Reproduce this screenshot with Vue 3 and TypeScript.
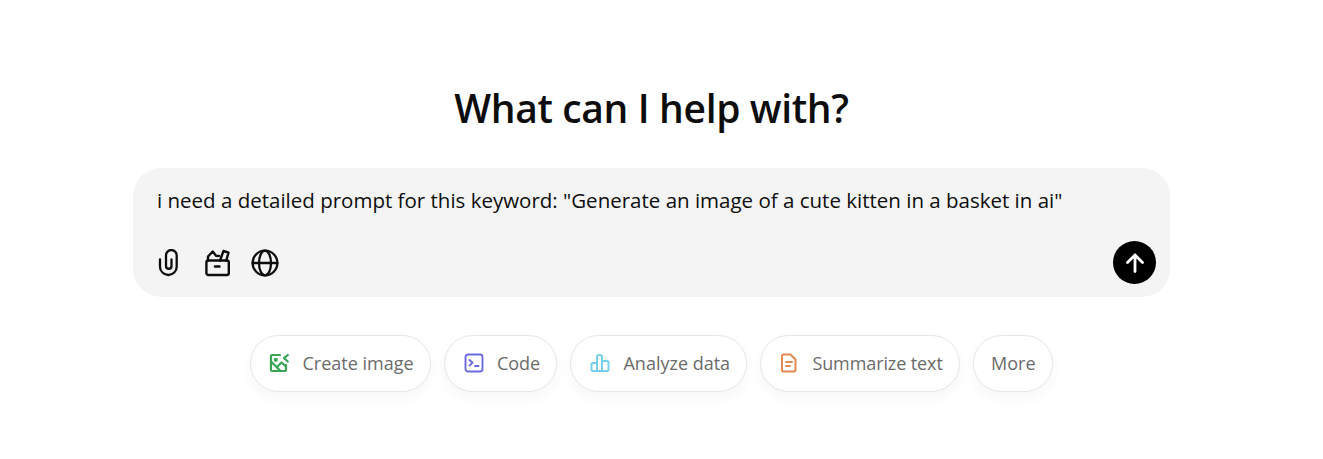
<script setup lang="ts">
const prompt = 'i need a detailed prompt for this keyword: "Generate an image of a cute kitten in a basket in ai"'
</script>

<template>
  <main class="page">
    <h1 class="title">What can I help with?</h1>
    <section class="composer">
      <p class="prompt">{{ prompt }}</p>
      <div class="toolbar">
        <div class="tools">
          <svg class="tool" viewBox="0 0 28 28" fill="none" stroke="#0d0d0d" stroke-width="2.3" stroke-linecap="round" stroke-linejoin="round">
            <path d="M6 10.5v7.15a8.35 8.35 0 0 0 16.7 0V6.4a5.35 5.35 0 0 0-10.7 0V17a2.75 2.75 0 0 0 5.5 0v-6.5" />
          </svg>
          <svg class="tool" viewBox="0 0 28 28" fill="none" stroke="#0d0d0d" stroke-width="2.4" stroke-linecap="round" stroke-linejoin="round">
            <rect x="3.4" y="11.5" width="22.4" height="14.5" rx="2" />
            <path d="M12 17.5h4.5" />
            <path d="M5 11.5V7.5l4.7-5 3.3 4.2 3 .3" />
            <path d="M17 11.5 20.5 2l5 1.6-2.2 7.9" />
          </svg>
          <svg class="tool" viewBox="0 0 28 28" fill="none" stroke="#0d0d0d" stroke-width="2.3" stroke-linecap="round" stroke-linejoin="round">
            <circle cx="14" cy="14" r="12.4" />
            <path d="M1.6 14h24.8" />
            <ellipse cx="14" cy="14" rx="6" ry="12.4" />
          </svg>
        </div>
        <button class="send" type="button" aria-label="Send">
          <svg viewBox="0 0 24 24" fill="none" stroke="#fff" stroke-width="2.8" stroke-linecap="round" stroke-linejoin="round">
            <path d="M12 20.5V4M4.5 11.5 12 4l7.5 7.5" />
          </svg>
        </button>
      </div>
    </section>
    <nav class="chips">
      <button class="chip" type="button">
        <svg viewBox="0 0 20 20" fill="none" stroke="#3aa655" stroke-width="2.2" stroke-linecap="round" stroke-linejoin="round">
          <path d="M11 2H3a1 1 0 0 0-1 1v14a1 1 0 0 0 1 1h13a1 1 0 0 0 1-1V12" />
          <circle cx="6.8" cy="6.8" r="1" />
          <path d="M2 8.5 11.5 18M8 14l4.5-4.5 4.5 4" />
          <path d="M18.8 2 15 5.2l3.8 3.3" />
        </svg>
        <span>Create image</span>
      </button>
      <button class="chip chip-code" type="button">
        <svg viewBox="0 0 20 20" fill="none" stroke="#6b6be0" stroke-width="1.9" stroke-linecap="round" stroke-linejoin="round">
          <rect x="1.5" y="1.5" width="17" height="17" rx="2.5" />
          <path d="m5.5 7 3 2.8-3 2.8M11 13h3.5" />
        </svg>
        <span>Code</span>
      </button>
      <button class="chip chip-data" type="button">
        <svg viewBox="0 0 20 20" fill="none" stroke="#76d0ea" stroke-width="2" stroke-linecap="round" stroke-linejoin="round">
          <path d="M1.5 11.5a1.5 1.5 0 0 1 1.5-1.5h4v8H3a1.5 1.5 0 0 1-1.5-1.5z" />
          <path d="M7 4a2 2 0 0 1 2-2h1a2 2 0 0 1 2 2v14H7z" />
          <path d="M12 8h5a1.5 1.5 0 0 1 1.5 1.5v7A1.5 1.5 0 0 1 17 18h-5z" />
        </svg>
        <span>Analyze data</span>
      </button>
      <button class="chip chip-text" type="button">
        <svg viewBox="0 0 20 20" fill="none" stroke="#e2894f" stroke-width="2" stroke-linecap="round" stroke-linejoin="round">
          <path d="M4.5 1.5h7l5 5v10.5a1.5 1.5 0 0 1-1.5 1.5h-10.5A1.5 1.5 0 0 1 3 17V3a1.5 1.5 0 0 1 1.5-1.5z" />
          <path d="M7 9h6M7 13h4" />
        </svg>
        <span>Summarize text</span>
      </button>
      <button class="chip chip-more" type="button"><span>More</span></button>
    </nav>
  </main>
</template>

<style>
html, body { margin: 0; background: #fff; }
</style>

<style scoped>
.page {
  box-sizing: border-box;
  width: 1303px;
  height: 459px;
  padding-top: 82px;
  display: flex;
  flex-direction: column;
  align-items: center;
  font-family: "Open Sans", "Noto Sans", sans-serif;
  background: #fff;
}
.title {
  margin: 0;
  height: 52px;
  line-height: 52px;
  font-size: 39px;
  font-weight: 600;
  color: #0d0d0d;
  letter-spacing: -0.36px;
}
.composer {
  box-sizing: border-box;
  width: 1037px;
  height: 129px;
  margin-top: 34px;
  padding: 17px 14px 13px 24px;
  border-radius: 28px;
  background: #f4f4f4;
  display: flex;
  flex-direction: column;
  justify-content: space-between;
}
.prompt {
  margin: 0;
  font-size: 20.5px;
  line-height: 30px;
  color: #0d0d0d;
}
.toolbar {
  display: flex;
  align-items: center;
  justify-content: space-between;
}
.tools {
  display: flex;
  gap: 20.5px;
  align-items: center;
  margin-left: -3px;
}
.tool {
  width: 28px;
  height: 28px;
  display: block;
}
.send {
  width: 43px;
  height: 43px;
  border: 0;
  padding: 0;
  border-radius: 50%;
  background: #000;
  display: flex;
  align-items: center;
  justify-content: center;
}
.send svg {
  width: 24px;
  height: 24px;
}
.chips {
  display: flex;
  gap: 13.3px;
  margin-top: 38px;
}
.chip {
  box-sizing: border-box;
  height: 57px;
  display: flex;
  align-items: center;
  gap: 13px;
  padding: 0 16px 1px 18px;
  border: 1px solid #e6e6e6;
  border-radius: 29px;
  background: #fff;
  box-shadow: 0 6px 14px rgba(0, 0, 0, 0.035);
  font-family: inherit;
  font-size: 18px;
  color: #6b6b6b;
}
.chip svg {
  width: 20px;
  height: 20px;
  flex: none;
}
.chip-code {
  padding-left: 19px;
}
.chip-data {
  padding-left: 19px;
}
.chip-text {
  letter-spacing: -0.1px;
}
.chip-more {
  padding: 0 16px 1px 17px;
}
</style>
